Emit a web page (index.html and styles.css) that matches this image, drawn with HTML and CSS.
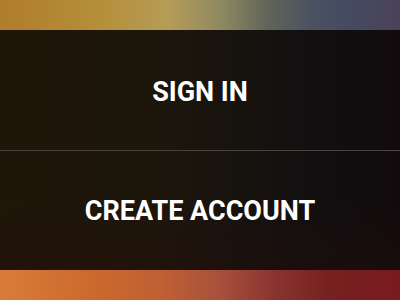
FILE: index.html
```html
<!DOCTYPE html>
<html>
<head>
<meta charset="utf-8">
<link rel="stylesheet" href="styles.css">
</head>
<body>
<div class="screen">
  <div class="strip strip-top"></div>
  <div class="panel">
    <button class="action action-first">SIGN IN</button>
    <button class="action action-second">CREATE ACCOUNT</button>
  </div>
  <div class="strip strip-bottom"></div>
</div>
</body>
</html>
```
FILE: styles.css
```css
html, body {
  margin: 0;
  padding: 0;
}
.screen {
  width: 400px;
  height: 300px;
  display: flex;
  flex-direction: column;
  overflow: hidden;
}
.strip {
  height: 30px;
  flex: none;
}
.strip-top {
  background: linear-gradient(to right, #b07d2b 0%, #b58f3a 25%, #b59c57 42%, #8f8a62 55%, #606459 67%, #4a5260 78%, #454a60 88%, #4a4258 100%);
}
.strip-bottom {
  background: linear-gradient(to right, #d97c3a 0%, #cc6a2c 22%, #bf6034 40%, #a8503c 55%, #8a3530 68%, #76211f 82%, #7a1a20 100%);
}
.panel {
  flex: 1;
  display: flex;
  flex-direction: column;
  background:
    linear-gradient(to bottom, rgba(0,0,0,0) 70%, rgba(40,12,10,0.35) 100%),
    linear-gradient(to right, #1f1609 0%, #1d160c 40%, #121010 75%, #110b0e 100%);
}
.action {
  flex: none;
  border: 0;
  background: transparent;
  color: #ffffff;
  font-family: Roboto, "Liberation Sans", sans-serif;
  font-weight: 700;
  font-size: 27px;
  padding: 0;
  margin: 0;
  display: flex;
  align-items: center;
  justify-content: center;
  box-sizing: border-box;
}
.action-first {
  height: 121px;
  border-bottom: 1px solid #4a443e;
  padding-top: 4px;
}
.action-second {
  height: 119px;
  padding-top: 1px;
}
```
